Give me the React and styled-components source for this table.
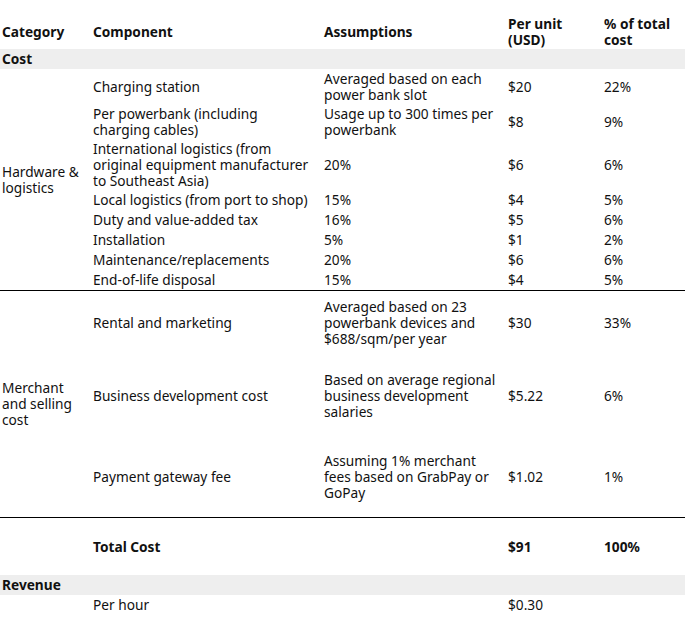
import React from 'react';
import styled, { createGlobalStyle } from 'styled-components';

const GlobalStyle = createGlobalStyle`
  body {
    margin: 0;
    background: #ffffff;
    font-family: "Noto Sans", "DejaVu Sans", sans-serif;
  }
`;

const Page = styled.div`
  padding-top: 13px;
`;

const Table = styled.table`
  width: 685px;
  border-collapse: collapse;
  table-layout: fixed;
  font-size: 13.7px;
  line-height: 16px;
  color: #111111;
`;

const HeadCell = styled.th`
  text-align: left;
  font-weight: 700;
  padding: 3px 2px 1px;
  vertical-align: middle;
  white-space: pre-line;
`;

const Cell = styled.td`
  padding: ${(p) => p.$pad}px 2px;
  vertical-align: middle;
  white-space: pre-line;
  font-weight: ${(p) => (p.$bold ? 700 : 400)};
`;

const BandRow = styled.tr`
  background: #eeeeee;
`;

const BandCell = styled.td`
  padding: 2px;
  font-weight: 700;
`;

const Row = styled.tr`
  border-top: ${(p) => (p.$divider ? '1px solid #000000' : 'none')};
`;

const hardware = [
  { name: 'Charging station', note: 'Averaged based on each\npower bank slot', unit: '$20', pct: '22%', pad: 1.5 },
  { name: 'Per powerbank (including\ncharging cables)', note: 'Usage up to 300 times per\npowerbank', unit: '$8', pct: '9%', pad: 1.5 },
  { name: 'International logistics (from\noriginal equipment manufacturer\nto Southeast Asia)', note: '20%', unit: '$6', pct: '6%', pad: 1.5 },
  { name: 'Local logistics (from port to shop)', note: '15%', unit: '$4', pct: '5%', pad: 2 },
  { name: 'Duty and value-added tax', note: '16%', unit: '$5', pct: '6%', pad: 2 },
  { name: 'Installation', note: '5%', unit: '$1', pct: '2%', pad: 2 },
  { name: 'Maintenance/replacements', note: '20%', unit: '$6', pct: '6%', pad: 2 },
  { name: 'End-of-life disposal', note: '15%', unit: '$4', pct: '5%', pad: 2 },
];

const merchant = [
  { name: 'Rental and marketing', note: 'Averaged based on 23\npowerbank devices and\n$688/sqm/per year', unit: '$30', pct: '33%', pad: 8 },
  { name: 'Business development cost', note: 'Based on average regional\nbusiness development\nsalaries', unit: '$5.22', pct: '6%', pad: 17 },
  { name: 'Payment gateway fee', note: 'Assuming 1% merchant\nfees based on GrabPay or\nGoPay', unit: '$1.02', pct: '1%', pad: 16 },
];

function Group({ label, items, divider }) {
  return items.map((item, i) => (
    <Row key={item.name} $divider={divider && i === 0}>
      {i === 0 && (
        <Cell $pad={2} rowSpan={items.length}>
          {label}
        </Cell>
      )}
      <Cell $pad={item.pad}>{item.name}</Cell>
      <Cell $pad={item.pad}>{item.note}</Cell>
      <Cell $pad={item.pad}>{item.unit}</Cell>
      <Cell $pad={item.pad}>{item.pct}</Cell>
    </Row>
  ));
}

export default function App() {
  return (
    <Page>
      <GlobalStyle />
      <Table>
        <colgroup>
          <col width="91" />
          <col width="231" />
          <col width="184" />
          <col width="96" />
          <col width="83" />
        </colgroup>
        <thead>
          <tr>
            <HeadCell>Category</HeadCell>
            <HeadCell>Component</HeadCell>
            <HeadCell>Assumptions</HeadCell>
            <HeadCell>{'Per unit\n(USD)'}</HeadCell>
            <HeadCell>{'% of total\ncost'}</HeadCell>
          </tr>
        </thead>
        <tbody>
          <BandRow>
            <BandCell colSpan={5}>Cost</BandCell>
          </BandRow>
          <Group label={'Hardware &\nlogistics'} items={hardware} />
          <Group label={'Merchant\nand selling\ncost'} items={merchant} divider />
          <Row $divider>
            <Cell $pad={20.5} />
            <Cell $pad={20.5} $bold>Total Cost</Cell>
            <Cell $pad={20.5} />
            <Cell $pad={20.5} $bold>$91</Cell>
            <Cell $pad={20.5} $bold>100%</Cell>
          </Row>
          <BandRow>
            <BandCell colSpan={5}>Revenue</BandCell>
          </BandRow>
          <Row>
            <Cell $pad={2} />
            <Cell $pad={2}>Per hour</Cell>
            <Cell $pad={2} />
            <Cell $pad={2}>$0.30</Cell>
            <Cell $pad={2} />
          </Row>
        </tbody>
      </Table>
    </Page>
  );
}
